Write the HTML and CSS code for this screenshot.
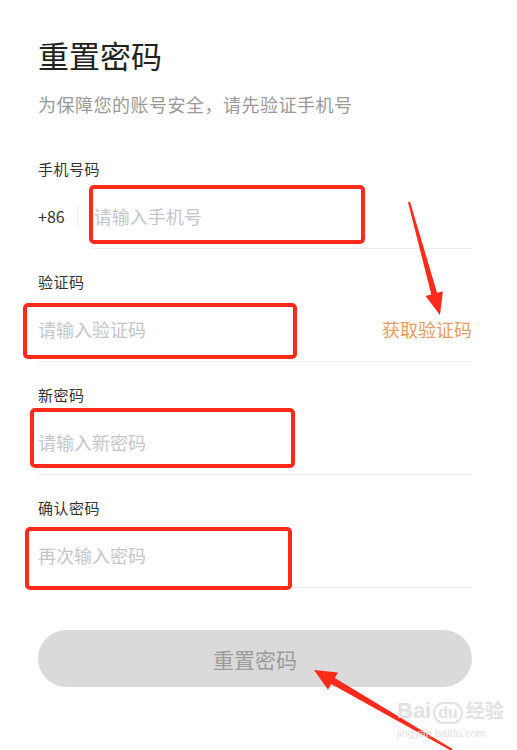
FILE: index.html
```html
<!DOCTYPE html>
<html lang="zh-CN">
<head>
    <meta charset="UTF-8">
    <meta name="viewport" content="width=device-width, initial-scale=1.0">
    <title>重置密码</title>
    <link rel="stylesheet" href="styles.css">
</head>
<body>

<div class="page">
    <h1 class="title">重置密码</h1>
    <p class="subtitle">为保障您的账号安全，请先验证手机号</p>

    <form class="reset-form">
        <!-- 手机号 -->
        <div class="field">
            <label class="field-label">手机号码</label>
            <div class="field-row phone">
                <span class="prefix">+86</span>
                <span class="divider"></span>
                <input class="field-input" type="tel" placeholder="请输入手机号">
            </div>
        </div>

        <!-- 验证码 -->
        <div class="field">
            <label class="field-label">验证码</label>
            <div class="field-row">
                <input class="field-input" type="text" placeholder="请输入验证码">
                <a class="get-code">获取验证码</a>
            </div>
        </div>

        <!-- 新密码 -->
        <div class="field">
            <label class="field-label">新密码</label>
            <div class="field-row">
                <input class="field-input" type="password" placeholder="请输入新密码">
            </div>
        </div>

        <!-- 确认密码 -->
        <div class="field">
            <label class="field-label">确认密码</label>
            <div class="field-row">
                <input class="field-input" type="password" placeholder="再次输入密码">
            </div>
        </div>

        <button type="submit" class="submit-btn">重置密码</button>
    </form>

    <!-- 标注框 -->
    <div class="mark mark-phone"></div>
    <div class="mark mark-code"></div>
    <div class="mark mark-new"></div>
    <div class="mark mark-confirm"></div>

    <!-- 标注箭头 -->
    <svg class="arrows" width="517" height="750" viewBox="0 0 517 750">
        <polygon fill="#ff2a1a" points="408,202.3 410,201.7 437.1,292.9 442.9,291.3 440,315 425.5,296.1 431.3,294.5"/>
        <polygon fill="#ff2a1a" points="314,670 338,672.4 334.8,678 452.5,749.1 451.5,750.9 331.2,684 328,689.7"/>
    </svg>

    <!-- 水印 -->
    <div class="watermark">
        <div class="wm-top">Bai<span class="wm-paw">du</span><span class="wm-cn">经验</span></div>
        <div class="wm-url">jingyan.baidu.com</div>
    </div>
</div>

</body>
</html>
```

FILE: styles.css
```css
/* Global Styles */
body {
    margin: 0;
    padding: 0;
    background: #fff;
    font-family: "Noto Sans CJK SC", "Noto Sans", sans-serif;
    color: #333;
}
.page {
    position: relative;
    width: 517px;
    height: 750px;
    overflow: hidden;
    box-sizing: border-box;
    padding: 0 45px 0 38px;
}
.title {
    margin: 35px 0 0;
    font-size: 31px;
    line-height: 40px;
    font-weight: 400;
    color: #222;
}
.subtitle {
    margin: 17px 0 0;
    font-size: 18px;
    line-height: 24px;
    letter-spacing: 0.5px;
    color: #999;
}
.reset-form {
    margin-top: 43px;
}
.field {
    margin-top: 23px;
}
.field-label {
    display: block;
    font-size: 15px;
    line-height: 20px;
    letter-spacing: 0.5px;
    color: #333;
    margin-bottom: 4px;
}
.field-row {
    display: flex;
    align-items: center;
    height: 65px;
    border-bottom: 1px solid #eee;
}
.field-input {
    flex: 1;
    min-width: 0;
    border: none;
    outline: none;
    background: transparent;
    padding: 0;
    font: inherit;
    font-size: 18px;
    color: #333;
}
.field-input::placeholder {
    color: #c3c6cc;
}
/* phone row: the line only sits under the input */
.field-row.phone {
    border-bottom: none;
    height: 66px;
}
.phone .prefix {
    font-size: 16px;
    color: #333;
}
.phone .divider {
    width: 1px;
    height: 21px;
    background: #eee;
    margin: 0 13px 0 12px;
}
.phone .field-input {
    align-self: stretch;
    border-bottom: 1px solid #eee;
    padding-left: 3px;
}
.get-code {
    font-size: 18px;
    color: #e89c62;
    cursor: pointer;
}
.submit-btn {
    display: block;
    width: 100%;
    height: 57px;
    margin-top: 42px;
    border: none;
    border-radius: 29px;
    background-color: #dadada;
    color: #9b9b9b;
    font: inherit;
    font-size: 21px;
}

/* Annotation overlay */
.mark {
    position: absolute;
    box-sizing: border-box;
    border: 4px solid #ff2a1a;
    border-radius: 5px;
}
.mark-phone {
    left: 89px;
    top: 185px;
    width: 276px;
    height: 59px;
}
.mark-code {
    left: 23px;
    top: 303px;
    width: 274px;
    height: 56px;
}
.mark-new {
    left: 30px;
    top: 408px;
    width: 265px;
    height: 60px;
}
.mark-confirm {
    left: 25px;
    top: 527px;
    width: 267px;
    height: 63px;
}
.arrows {
    position: absolute;
    left: 0;
    top: 0;
}
.watermark {
    position: absolute;
    left: 397px;
    top: 698px;
    color: #e2e2e2;
    font-family: "Liberation Sans", sans-serif;
}
.wm-top {
    font-size: 22px;
    line-height: 24px;
    font-weight: bold;
}
.wm-paw {
    display: inline-block;
    margin-left: 2px;
    padding: 0 3px;
    border: 2px solid #e2e2e2;
    border-radius: 12px;
    font-size: 16px;
    line-height: 18px;
}
.wm-cn {
    margin-left: 3px;
    font-family: "Noto Sans CJK SC", sans-serif;
    font-size: 19px;
}
.wm-url {
    font-size: 11px;
    line-height: 14px;
    margin-top: 2px;
}
```
